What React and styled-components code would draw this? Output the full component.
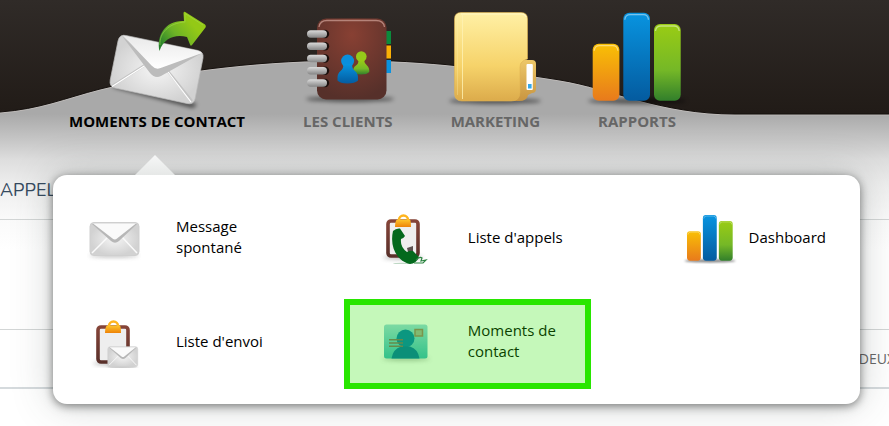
import React from 'react'
import styled, { createGlobalStyle } from 'styled-components'

const GlobalStyle = createGlobalStyle`
  * {
    box-sizing: border-box;
  }

  body {
    margin: 0;
    font-family: 'Open Sans', 'Noto Sans', sans-serif;
    font-size: 15px;
    background: #ffffff;
  }
`

const Page = styled.div`
  position: relative;
  min-height: 100vh;
  overflow: hidden;
  background: linear-gradient(
    #a9a9a9 0,
    #a9a9a9 114px,
    #c6c6c6 140px,
    #dedede 160px,
    #eeeeee 185px,
    #fafafa 218px,
    #ffffff 250px
  );
`

const Wave = styled.svg`
  position: absolute;
  top: 0;
  left: 0;
  width: 100%;
  height: 120px;
`

const Header = styled.header`
  position: relative;
  padding: 7px 40px 0;
`

const Nav = styled.nav`
  display: flex;
`

const NavLink = styled.a`
  display: flex;
  flex-direction: column;
  align-items: center;
  color: ${(props) => (props.$active ? '#000000' : '#666666')};
  text-decoration: none;
`

const NavIcon = styled.svg`
  width: 100px;
  height: 100px;
  overflow: visible;
`

const NavLabel = styled.span`
  padding: 0 29px;
  font-size: 15px;
  font-weight: 700;
  line-height: 28px;
  text-transform: uppercase;
  white-space: nowrap;
`

const TitleBar = styled.div`
  padding: 43px 0 17px;
  border-bottom: 1px solid #d3d6d6;
`

const Title = styled.h1`
  margin: 0;
  color: #34495e;
  font-family: Nunito, Lato, sans-serif;
  font-size: 18px;
  font-weight: 400;
  line-height: 24px;
`

const Filters = styled.div`
  height: 110px;
  border-bottom: 1px solid #d3d6d6;
`

const Columns = styled.div`
  display: flex;
  justify-content: flex-end;
  width: calc(100% + 6px);
  padding: 18px 0;
  border-bottom: 2px solid #d5dadd;
  color: #666666;
  font-size: 14px;
  line-height: 21px;
`

const Menu = styled.div`
  position: absolute;
  top: 175px;
  left: 53px;
  right: 29px;
  padding: 19px 34px 20px 34px;
  border-radius: 14px;
  background: #ffffff;
  box-shadow:
    0 0 40px rgba(60, 72, 68, 0.26),
    0 2px 10px rgba(0, 0, 0, 0.5);
`

const MenuArrow = styled.span`
  position: absolute;
  top: -20px;
  left: 82px;
  width: 40px;
  height: 20px;
  clip-path: polygon(50% 0, 100% 100%, 0 100%);
  background: linear-gradient(#f6f7f7, #e6e8e7);
`

const MenuGrid = styled.div`
  display: grid;
  grid-template-columns: 293fr 305fr auto;
  row-gap: 18px;
`

const MenuLink = styled.a`
  position: relative;
  display: flex;
  align-items: center;
  gap: ${(props) => (props.$compact ? '12px' : '35px')};
  min-height: 86px;
  color: #000000;
  line-height: 21px;
  text-decoration: none;
`

const MenuIcon = styled.svg`
  flex: none;
  width: 54px;
  height: 54px;
`

const MenuText = styled.span`
  max-width: 100px;
`

const Highlight = styled.span`
  position: absolute;
  top: 1px;
  bottom: -5px;
  left: -35px;
  width: 247px;
  border: 6px solid #28e600;
  background: rgba(40, 230, 0, 0.27);
`

const Defs = styled.svg`
  position: absolute;
  width: 0;
  height: 0;
`

function Gradient({ id, from, to, mid }) {
  return (
    <linearGradient id={id} x1="0" y1="0" x2="0" y2="1">
      <stop offset="0" stopColor={from} />
      {mid && <stop offset="0.6" stopColor={mid} />}
      <stop offset="1" stopColor={to} />
    </linearGradient>
  )
}

function SharedDefs() {
  return (
    <Defs aria-hidden="true">
      <defs>
        <Gradient id="dark" from="#302b28" to="#211b17" />
        <Gradient id="orange" from="#f9c005" to="#e87a1c" />
        <Gradient id="blue" from="#0894e0" to="#045b9f" />
        <Gradient id="green" from="#9acc14" mid="#75b827" to="#327f2b" />
        <Gradient id="ring" from="#dadada" to="#858585" />
        <Gradient id="folder" from="#fff0a5" mid="#f6d36a" to="#dcab4b" />
        <Gradient id="folderBack" from="#edc768" to="#c99540" />
        <Gradient id="clip" from="#ffc62c" to="#ed8207" />
        <Gradient id="board" from="#854438" to="#59302a" />
        <Gradient id="flap" from="#e9e9e9" to="#ffffff" />
        <Gradient id="card" from="#9cd6df" to="#39b5bd" />
        <radialGradient id="paper">
          <stop offset="0" stopColor="#f5f5f5" />
          <stop offset="1" stopColor="#d2d2d2" />
        </radialGradient>
        <radialGradient id="leather" cx="0.5" cy="0.2" r="0.8">
          <stop offset="0" stopColor="#884033" />
          <stop offset="1" stopColor="#56302a" />
        </radialGradient>
        <linearGradient id="arrow" x1="0" y1="0.8" x2="0.7" y2="0.3">
          <stop offset="0" stopColor="#26802c" />
          <stop offset="0.5" stopColor="#6db326" />
          <stop offset="1" stopColor="#94c916" />
        </linearGradient>
        <filter id="soft" x="-20%" y="-200%" width="140%" height="500%">
          <feGaussianBlur stdDeviation="2" />
        </filter>
      </defs>
    </Defs>
  )
}

function MailArrowArt() {
  return (
    <>
      <path
        d="M5 80 L86 101 L90 97 L10 77Z"
        fill="#000"
        opacity="0.6"
        filter="url(#soft)"
      />
      <path
        d="M19 28.5 L91 43.5 Q97 45 96 51 L88 92 Q86.500 98 80 96.500 L8 81 Q2 79.500 3.200 73 L11 34 Q12.500 27 19 28.500Z"
        fill="url(#paper)"
        stroke="#bcbcbc"
        strokeWidth="0.7"
      />
      <path d="M38 58 L5 79 M60 63 L85 94" stroke="#c3c3c3" strokeWidth="2.400" />
      <path d="M38 58.500 L5 79.500 M60 63.500 L84 95" stroke="#fff" strokeWidth="1.200" />
      <path d="M15 29 L43 66 Q48 72 54 69 L95 46 L50 58Z" fill="#bcbcbc" />
      <path
        d="M16 28.500 L90 43.500 Q94 44.500 95 46 L55 60.500 Q49 63.500 44.500 58.500Z"
        fill="url(#flap)"
      />
      <path
        d="M52.500 44 C49 28 59 13 77 14 L76.500 6 Q77 4 79 5.500 L98 17.500 Q99.500 19 98.500 20.500 L85 38 Q83.500 39.500 83 37.500 L80 30 C68 27 57 31 52.500 44Z"
        fill="url(#arrow)"
      />
      <path
        d="M53 38 C52 26 62 16 78 15 L78 6.500 L96 18"
        fill="none"
        stroke="#a5d94d"
        strokeWidth="0.8"
        opacity="0.7"
      />
    </>
  )
}

function AddressBookArt() {
  const rings = [27, 39.2, 51.5, 63.7, 76]

  return (
    <>
      <ellipse cx="52" cy="92" rx="44" ry="3" opacity="0.5" filter="url(#soft)" />
      <rect x="86" y="24" width="7" height="13" fill="#0b8b3c" />
      <rect x="86" y="38.500" width="7" height="13" fill="#fbb005" />
      <rect x="86" y="53" width="7" height="13" fill="#0a92df" />
      <rect x="19" y="11.500" width="69.500" height="81" rx="9" fill="url(#leather)" />
      <path
        d="M21 20 Q22 13.500 29 13.500 L78 13.500 Q85.500 13.500 86.500 20"
        fill="none"
        stroke="#b58379"
        strokeWidth="1.300"
      />
      {rings.map((y) => (
        <g key={y}>
          <circle cx="27" cy={y} r="4.200" fill="#1c100d" />
          <rect x="9" y={y - 3.7} width="20" height="7.500" rx="3.700" fill="url(#ring)" />
        </g>
      ))}
      <circle cx="63.300" cy="49.500" r="5.300" fill="#95c91a" />
      <path
        d="M60.500 53 H66 Q66.500 57 69 58.500 Q71.500 60.500 71.300 65 Q69 67.500 63 67.500 Q56 67.500 55 65 Q55 60 58 58.500 Q60.500 57 60.500 53Z"
        fill="url(#green)"
      />
      <circle cx="49.600" cy="54" r="6.500" fill="#0a8fdd" />
      <path
        d="M45.500 57 H54 Q54 62 57 64 Q60.500 66.500 60 73.500 Q57 76.500 49.500 76.500 Q42 76.500 39.500 73.500 Q39 66.500 42.500 64 Q45.500 62 45.500 57Z"
        fill="url(#blue)"
      />
    </>
  )
}

function FolderArt() {
  return (
    <>
      <ellipse cx="50" cy="94" rx="46" ry="3" opacity="0.5" filter="url(#soft)" />
      <path
        d="M76 55 Q76 53 79 53 H87 Q91 53 91 57 V82 Q91 86 87 86 L83 88 Q82 94 74 94 H60Z"
        fill="url(#folderBack)"
      />
      <rect x="81.500" y="57" width="6.300" height="26" rx="1" fill="#fff" />
      <rect x="83" y="77" width="3.600" height="4.500" fill="#35a9ea" />
      <path
        d="M16 5.500 H76 Q82.500 5.500 82.500 12 V52 Q75 54 75 60 V85 Q75 94 66 94 H17 Q9.500 94 9.500 86 V12 Q9.500 5.500 16 5.500Z"
        fill="url(#folder)"
        stroke="#e0b452"
        strokeWidth="0.6"
      />
      <path d="M17.500 8 V92" stroke="#fff2b3" strokeWidth="1" opacity="0.8" />
      <path d="M12.500 10 V88" stroke="#fff2b3" strokeWidth="1" opacity="0.3" />
      <path d="M16 7 H76 Q80 7 81 10" fill="none" stroke="#fff7c4" strokeWidth="1.200" />
    </>
  )
}

function BarsArt() {
  const bars = [
    { x: 5.7, y: 36.7, fill: 'url(#orange)' },
    { x: 36.3, y: 5.7, fill: 'url(#blue)' },
    { x: 67, y: 17, fill: 'url(#green)' }
  ]

  return (
    <>
      <ellipse cx="50" cy="94" rx="49" ry="3" opacity="0.5" filter="url(#soft)" />
      {bars.map(({ x, y, fill }) => (
        <g key={x}>
          <rect x={x} y={y} width="26.700" height={93.7 - y} rx="6" fill={fill} />
          <path
            d={`M${x + 1.5} ${y + 7} Q${x + 2} ${y + 2} ${x + 7} ${y + 2} H${x + 20} Q${x + 24.7} ${y + 2} ${x + 25.2} ${y + 7}`}
            fill="none"
            stroke="#fff"
            strokeWidth="1.300"
            opacity="0.45"
          />
        </g>
      ))}
    </>
  )
}

function EnvelopeArt() {
  return (
    <>
      <ellipse cx="27" cy="45.500" rx="25" ry="1.500" fill="#777" opacity="0.6" filter="url(#soft)" />
      <rect x="3" y="12.500" width="49" height="33" rx="4" fill="url(#paper)" stroke="#cfcfcf" />
      <path d="M5 43 L21 27 M50 43 L35 27" stroke="#fafafa" strokeWidth="1.500" />
      <path d="M5 14 L24 31 Q28 34.500 32 31 L50 14Z" fill="#b7b7b7" />
      <path d="M6 13.500 H49 L30 28.500 Q28 30.500 25.500 28.500Z" fill="#fafafa" />
    </>
  )
}

function Clipboard() {
  return (
    <>
      <ellipse cx="26" cy="49.500" rx="20" ry="1.500" fill="#555" opacity="0.6" filter="url(#soft)" />
      <rect x="11" y="13" width="30" height="35" rx="3" fill="#eeeeee" stroke="url(#board)" strokeWidth="3.600" />
      <path d="M22 12 a4.500 4.500 0 0 1 9 0" fill="none" stroke="#ffb51f" strokeWidth="2.500" />
      <path d="M20 11.500 H33 Q34 13 34 19 H18 Q18 13 20 11.500Z" fill="url(#clip)" />
    </>
  )
}

function SendListArt() {
  return (
    <>
      <Clipboard />
      <g transform="translate(19 25) scale(0.610)">
        <EnvelopeArt />
      </g>
    </>
  )
}

function CallListArt() {
  return (
    <>
      <g transform="translate(-2 -2)">
        <Clipboard />
      </g>
      <path d="M28 38 L34 36 V42 H29Z" fill="#5b5050" />
      <path
        d="M14 21 Q17 18 21 18.500 L26 26 Q24 29 22 29 Q21 37 28 42 Q32 40 34 41 L40 47 Q37 54 31 54 C20 52 10 39 14 21Z"
        fill="#04691d"
      />
      <path
        d="M37 50 Q41 46 43 48 L42 51 L47 50 L44 53 H35"
        fill="none"
        stroke="#2c8441"
        strokeWidth="1.200"
      />
      <ellipse cx="23" cy="53.500" rx="9" ry="0.800" fill="#04691d" opacity="0.25" />
    </>
  )
}

function ContactCardArt() {
  return (
    <>
      <ellipse cx="27" cy="45" rx="24" ry="1.500" fill="#555" opacity="0.5" filter="url(#soft)" />
      <rect x="5" y="10.500" width="43.500" height="34" rx="2.500" fill="url(#card)" />
      <circle cx="26.500" cy="24.500" r="9" fill="#007bb0" />
      <path d="M12.500 44.500 Q14 35 22 32.500 H31 Q39 35 40.500 44.500Z" fill="#006fa5" />
      <path d="M10 25.700 H24 M10 29 H24 M10 32.200 H24" stroke="#7d6a64" strokeWidth="1.600" />
      <rect x="36" y="15.500" width="7.500" height="6.500" fill="#a3aa9c" stroke="#9c7766" strokeWidth="1.500" />
    </>
  )
}

const sections = [
  { label: 'Moments de contact', Art: MailArrowArt, active: true },
  { label: 'Les clients', Art: AddressBookArt },
  { label: 'Marketing', Art: FolderArt },
  { label: 'Rapports', Art: BarsArt }
]

const entries = [
  { label: 'Message spontané', Art: EnvelopeArt },
  { label: "Liste d'appels", Art: CallListArt },
  { label: 'Dashboard', Art: BarsArt, box: '-2 -4 104 104', compact: true },
  { label: "Liste d'envoi", Art: SendListArt },
  { label: 'Moments de contact', Art: ContactCardArt, highlighted: true }
]

function HeaderWave() {
  const curve =
    'C40 109 65 98 100 89 C180 69 270 60 350 60 C430 60 490 69 560 80 C610 88 660 114 735 114 L889 114'

  return (
    <Wave viewBox="0 0 889 120" preserveAspectRatio="none" aria-hidden="true">
      <path d={`M0 112 ${curve} V0 H0Z`} fill="url(#dark)" />
      <path
        d={`M0 112 ${curve}`}
        fill="none"
        stroke="#bebab8"
        strokeWidth="1"
        transform="translate(0 1)"
      />
      <path d={`M0 112 ${curve}`} fill="none" stroke="#15100d" strokeWidth="1" />
    </Wave>
  )
}

function MenuEntry({ entry }) {
  const { label, Art, box, compact, highlighted } = entry

  return (
    <MenuLink href="#" $compact={compact}>
      <MenuIcon viewBox={box || '0 0 54 54'} aria-hidden="true">
        <Art />
      </MenuIcon>
      <MenuText>{label}</MenuText>
      {highlighted && <Highlight />}
    </MenuLink>
  )
}

function App() {
  return (
    <Page>
      <GlobalStyle />
      <SharedDefs />
      <HeaderWave />
      <Header>
        <Nav>
          {sections.map(({ label, Art, active }) => (
            <NavLink key={label} href="#" $active={active}>
              <NavIcon viewBox="0 0 100 100" aria-hidden="true">
                <Art />
              </NavIcon>
              <NavLabel>{label}</NavLabel>
            </NavLink>
          ))}
        </Nav>
      </Header>
      <main>
        <TitleBar>
          <Title>APPEL</Title>
        </TitleBar>
        <Filters />
        <Columns>DEUX</Columns>
      </main>
      <Menu>
        <MenuArrow />
        <MenuGrid>
          {entries.map((entry) => (
            <MenuEntry key={entry.label} entry={entry} />
          ))}
        </MenuGrid>
      </Menu>
    </Page>
  )
}

export default App
